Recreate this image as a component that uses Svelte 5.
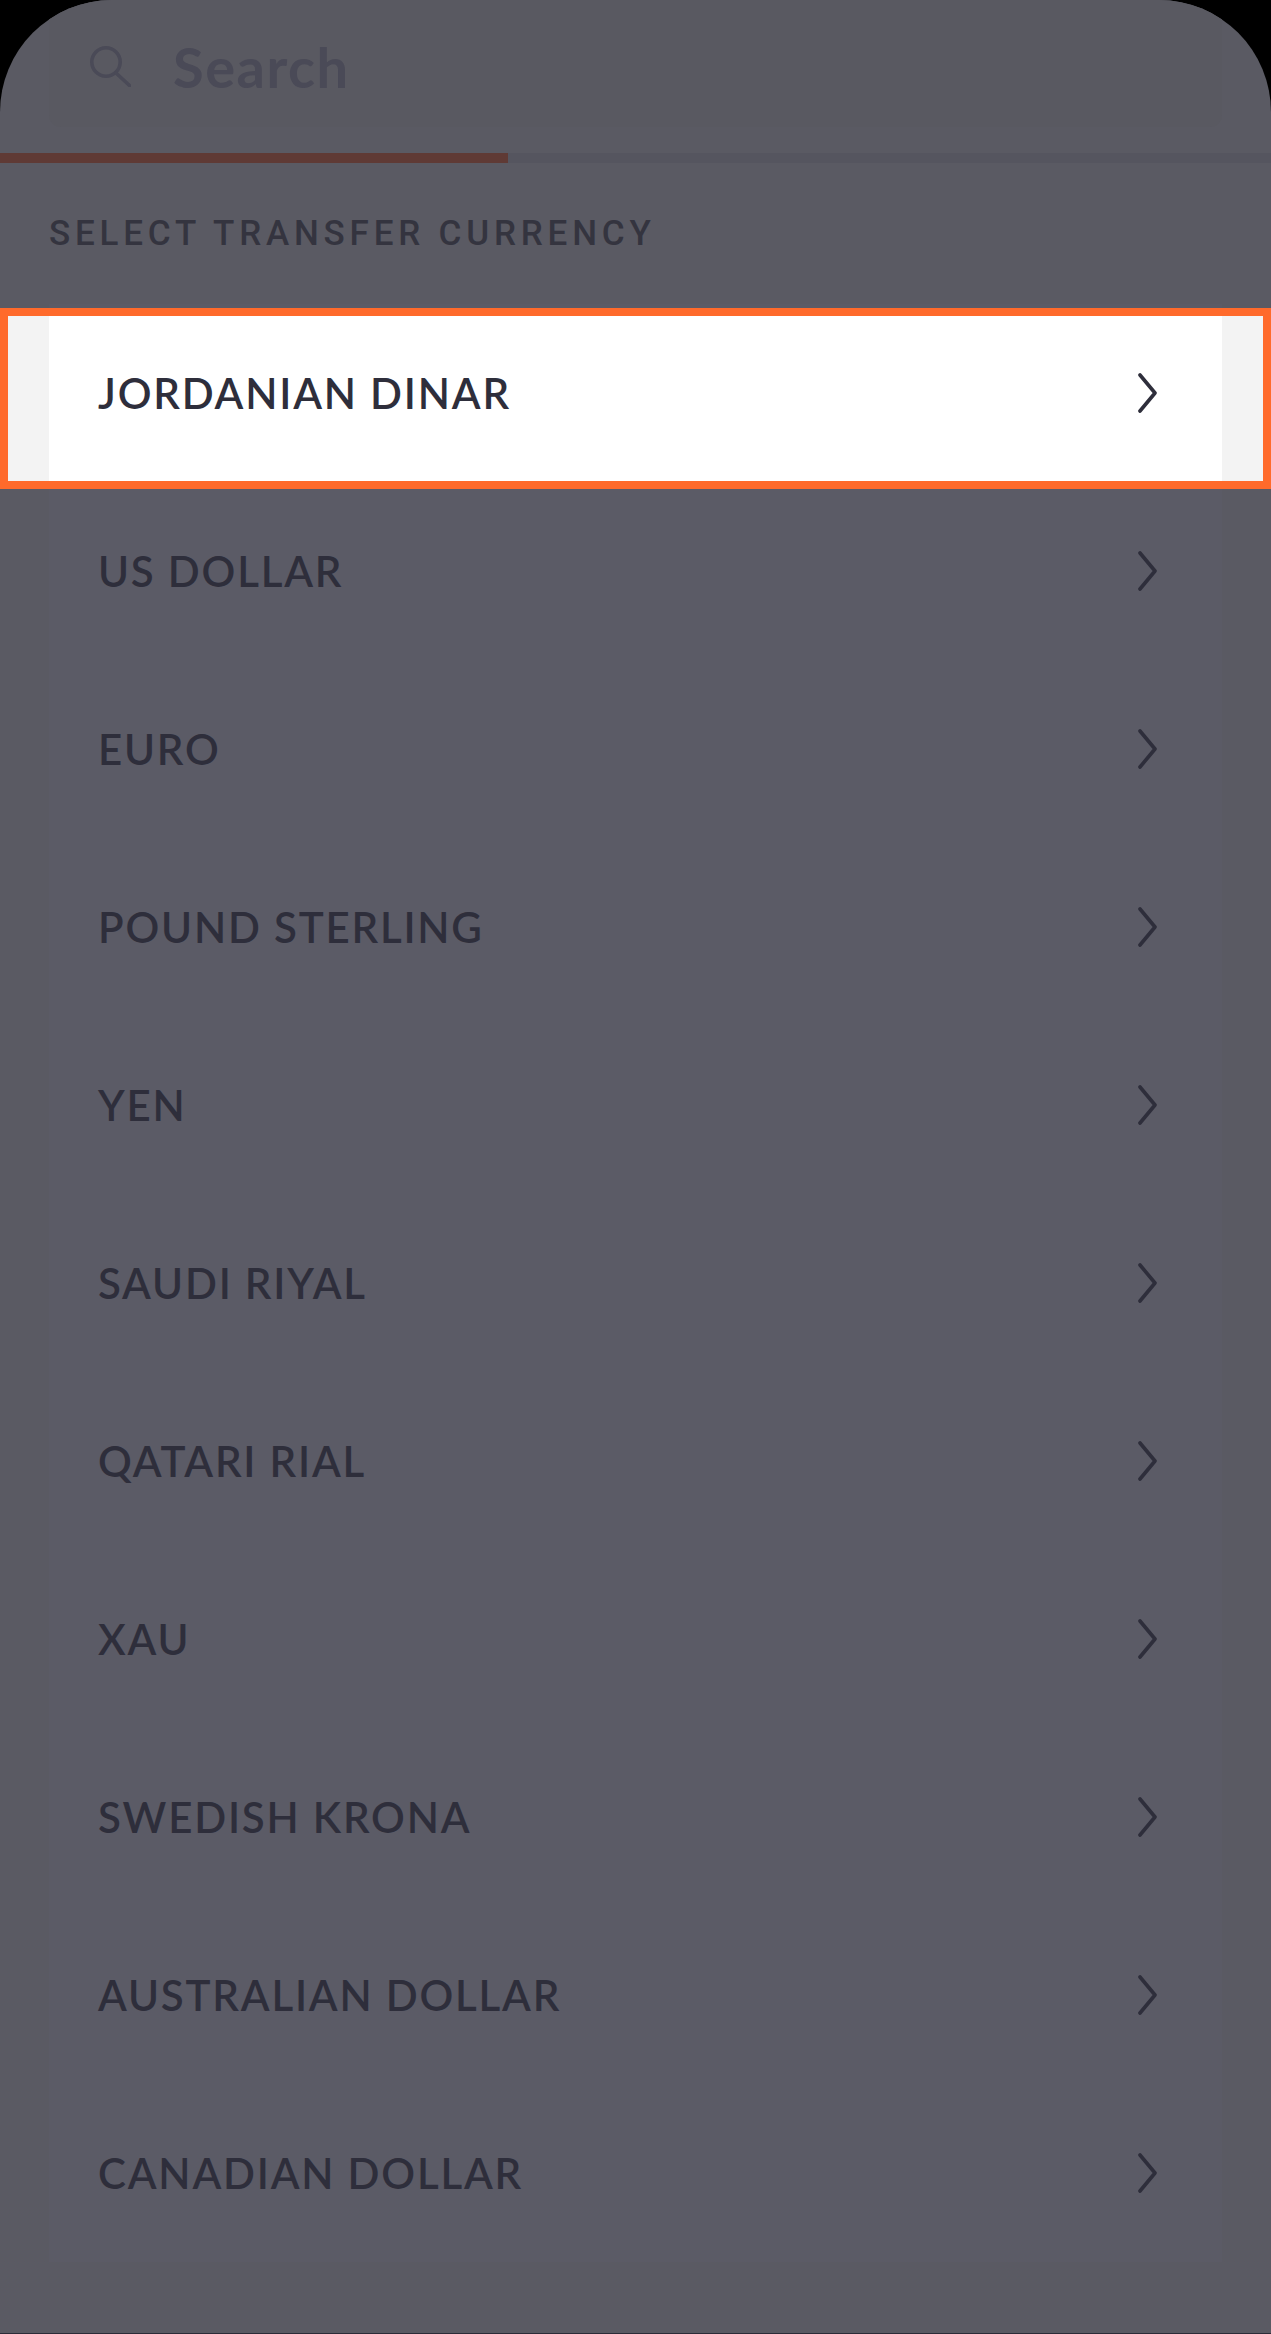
<script>
  const currencies = [
    'JORDANIAN DINAR', 'US DOLLAR', 'EURO', 'POUND STERLING', 'YEN', 'SAUDI RIYAL',
    'QATARI RIAL', 'XAU', 'SWEDISH KRONA', 'AUSTRALIAN DOLLAR', 'CANADIAN DOLLAR'
  ];
</script>

<div class="screen">
  <header class="search">
    <svg class="search-icon" viewBox="0 0 41 41" width="41" height="41" fill="none" stroke="#4a4a57" stroke-width="3.6" stroke-linecap="round">
      <circle cx="16" cy="16" r="14.2" />
      <path d="M26 27 L39.5 39.5" />
    </svg>
    <span class="search-text">Search</span>
  </header>
  <div class="progress"><div class="progress-fill"></div></div>
  <h2 class="title">SELECT TRANSFER CURRENCY</h2>
  <ul class="list">
    {#each currencies as name, i}
      <li class="row" class:active={i === 0}>
        <span class="name">{name}</span>
        <svg class="chevron" viewBox="0 0 20 40" width="20" height="40" fill="none" stroke="#2e2e3b" stroke-width="3.6" stroke-linecap="round" stroke-linejoin="round">
          <path d="M3 2 L18 20 L3 38" />
        </svg>
      </li>
    {/each}
  </ul>
</div>

<style>
  :global(html), :global(body) { margin: 0; background: #000; }
  .screen {
    width: 1271px;
    height: 2334px;
    box-sizing: border-box;
    overflow: hidden;
    background: #5a5a63;
    border-radius: 112px 112px 0 0;
    border-bottom: 1px solid #2c2c38;
    font-family: Lato, "Liberation Sans", sans-serif;
    color: #2e2e3b;
  }
  .search {
    height: 127px;
    margin: 0 49px;
    box-sizing: border-box;
    background: #595961;
    border-radius: 0 0 12px 12px;
    display: flex;
    align-items: center;
    padding: 0 0 0 41px;
  }
  .search-icon { margin-top: 5px; margin-right: 42px; }
  .search-text {
    font: 700 56px/1 Lato, sans-serif;
    letter-spacing: 1.5px;
    color: #4a4a57;
    position: relative;
    top: 3px;
  }
  .progress { height: 10px; margin-top: 26px; background: #55555f; }
  .progress-fill { width: 508px; height: 100%; background: #5f3a35; }
  .title {
    margin: 0;
    padding: 51px 0 0 49px;
    font: 500 35px/40px Roboto, sans-serif;
    letter-spacing: 4.8px;
    height: 50px;
    color: #34343f;
  }
  .list { list-style: none; margin: 40px 49px 0; padding: 0; background: #5b5b66; }
  .row {
    position: relative;
    height: 178px;
    display: flex;
    align-items: center;
    justify-content: space-between;
    padding: 0 65px 0 49px;
  }
  .name {
    position: relative;
    font: 600 42px/1 Lato, sans-serif;
    letter-spacing: 1.8px;
  }
  .chevron { position: relative; }
  .active::before {
    content: "";
    position: absolute;
    left: -49px;
    right: -49px;
    top: 4px;
    bottom: -7px;
    box-sizing: border-box;
    border: 8px solid #ff6a2b;
    background: linear-gradient(90deg, #f3f3f3 41px, #fff 41px, #fff calc(100% - 41px), #f3f3f3 calc(100% - 41px));
  }
</style>
